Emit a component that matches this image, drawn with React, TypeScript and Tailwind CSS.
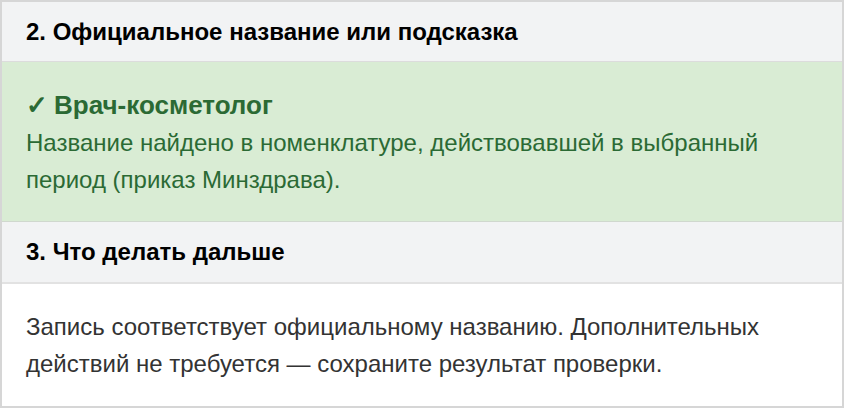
export default function App() {
  return (
    <div
      className="w-[844px] h-[408px] bg-white"
      style={{ fontFamily: '"Liberation Sans", Arial, sans-serif' }}
    >
      <div className="h-full border-2 border-[#d6d6d6] flex flex-col">
        {/* Step 2 header */}
        <div className="h-[60px] flex-shrink-0 bg-[#f2f3f4] border-b border-[#dcdcdc] px-6 flex items-center">
          <h2 className="text-[24px] font-bold text-black">
            2. Официальное название или подсказка
          </h2>
        </div>

        {/* Result */}
        <div className="h-[160px] flex-shrink-0 bg-[#d9ecd4] border-b border-[#d0d8ce] px-6 pt-[27px]">
          <div className="text-[26px] leading-[32px] font-bold text-[#2b6a34] flex items-center gap-[6px]">
            <span>✓</span>
            <span>Врач-косметолог</span>
          </div>
          <p className="mt-[3px] text-[24px] leading-[37px] text-[#2b6a34]">
            Название найдено в номенклатуре, действовавшей в выбранный
            <br />
            период (приказ Минздрава).
          </p>
        </div>

        {/* Step 3 header */}
        <div className="h-[62px] flex-shrink-0 bg-[#f2f3f4] border-b-2 border-[#e2e2e2] px-6 flex items-center">
          <h2 className="text-[24px] font-bold text-black">3. Что делать дальше</h2>
        </div>

        {/* Advice */}
        <div className="flex-1 px-6 pt-[24px]">
          <p className="text-[24px] leading-[37px] text-[#333333]">
            Запись соответствует официальному названию. Дополнительных
            <br />
            действий не требуется — сохраните результат проверки.
          </p>
        </div>
      </div>
    </div>
  )
}
